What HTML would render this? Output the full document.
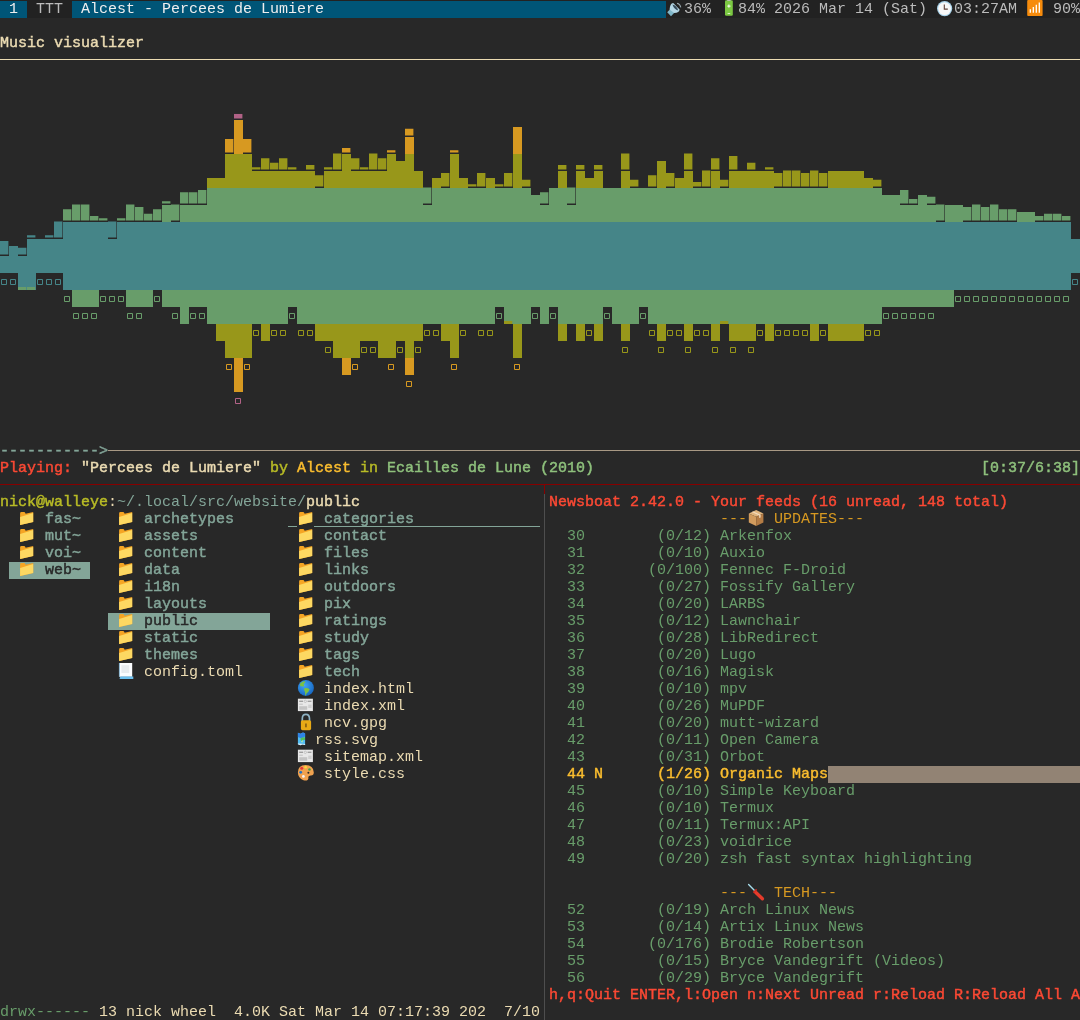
<!DOCTYPE html>
<html><head><meta charset="utf-8"><style>
html,body{margin:0;padding:0;}
body{width:1080px;height:1020px;overflow:hidden;background:#282828;position:relative;font-family:"Liberation Mono", monospace;font-size:15px;line-height:17px;}
.t{position:absolute;white-space:pre;height:17px;will-change:transform;}
.r{position:absolute;}
.i{position:absolute;}
</style></head><body>
<div class="r" style="left:0px;top:0px;width:1080px;height:18px;background:#222222;"></div>
<div class="r" style="left:0px;top:1px;width:27px;height:17px;background:#005577;"></div>
<div class="r" style="left:72px;top:1px;width:594px;height:17px;background:#005577;"></div>
<div class="t" style="left:9px;top:1px;color:#eeeeee;">1</div>
<div class="t" style="left:36px;top:1px;color:#bbbbbb;">TTT</div>
<div class="t" style="left:81px;top:1px;color:#eeeeee;">Alcest - Percees de Lumiere</div>
<div class="t" style="left:684px;top:1px;color:#bbbbbb;">36%</div>
<div class="t" style="left:738px;top:1px;color:#bbbbbb;">84% 2026 Mar 14 (Sat)</div>
<div class="t" style="left:954px;top:1px;color:#bbbbbb;">03:27AM</div>
<div class="t" style="left:1053px;top:1px;color:#bbbbbb;">90%</div>
<div class="t" style="left:0px;top:35px;color:#ebdbb2;-webkit-text-stroke:0.45px #ebdbb2;">Music visualizer</div>
<div class="r" style="left:0px;top:59px;width:1080px;height:1px;background:#ebdbb2;"></div>
<svg class="i" style="left:0;top:0" width="1080" height="450" shape-rendering="auto">
<path fill="#458588" d="M0 256h9v17h-9zM0 240.88h8.4v13.62h-8.4zM9 256h9v17h-9zM9 246h9v10h-9zM18 256h9v17h-9zM18 247.69h8.4v6.81h-8.4zM18 273h9v17h-9zM27 256h9v17h-9zM27 239h9v17h-9zM27 235.23h8.4v2.27h-8.4zM27 273h9v17h-9zM36 256h9v17h-9zM36 239h9v17h-9zM45 256h9v17h-9zM45 239h9v17h-9zM45 235.23h8.4v2.27h-8.4zM54 256h9v17h-9zM54 239h9v17h-9zM54 221.61h8.4v15.89h-8.4zM63 256h9v17h-9zM63 239h9v17h-9zM63 222h9v17h-9zM63 273h9v17h-9zM72 256h9v17h-9zM72 239h9v17h-9zM72 222h9v17h-9zM72 273h9v17h-9zM81 256h9v17h-9zM81 239h9v17h-9zM81 222h9v17h-9zM81 273h9v17h-9zM90 256h9v17h-9zM90 239h9v17h-9zM90 222h9v17h-9zM90 273h9v17h-9zM99 256h9v17h-9zM99 239h9v17h-9zM99 222h9v17h-9zM99 273h9v17h-9zM108 256h9v17h-9zM108 239h9v17h-9zM108 221.61h8.4v15.89h-8.4zM108 273h9v17h-9zM117 256h9v17h-9zM117 239h9v17h-9zM117 222h9v17h-9zM117 273h9v17h-9zM126 256h9v17h-9zM126 239h9v17h-9zM126 222h9v17h-9zM126 273h9v17h-9zM135 256h9v17h-9zM135 239h9v17h-9zM135 222h9v17h-9zM135 273h9v17h-9zM144 256h9v17h-9zM144 239h9v17h-9zM144 222h9v17h-9zM144 273h9v17h-9zM153 256h9v17h-9zM153 239h9v17h-9zM153 222h9v17h-9zM153 273h9v17h-9zM162 256h9v17h-9zM162 239h9v17h-9zM162 222h9v17h-9zM162 273h9v17h-9zM171 256h9v17h-9zM171 239h9v17h-9zM171 222h9v17h-9zM171 273h9v17h-9zM180 256h9v17h-9zM180 239h9v17h-9zM180 222h9v17h-9zM180 273h9v17h-9zM189 256h9v17h-9zM189 239h9v17h-9zM189 222h9v17h-9zM189 273h9v17h-9zM198 256h9v17h-9zM198 239h9v17h-9zM198 222h9v17h-9zM198 273h9v17h-9zM207 256h9v17h-9zM207 239h9v17h-9zM207 222h9v17h-9zM207 273h9v17h-9zM216 256h9v17h-9zM216 239h9v17h-9zM216 222h9v17h-9zM216 273h9v17h-9zM225 256h9v17h-9zM225 239h9v17h-9zM225 222h9v17h-9zM225 273h9v17h-9zM234 256h9v17h-9zM234 239h9v17h-9zM234 222h9v17h-9zM234 273h9v17h-9zM243 256h9v17h-9zM243 239h9v17h-9zM243 222h9v17h-9zM243 273h9v17h-9zM252 256h9v17h-9zM252 239h9v17h-9zM252 222h9v17h-9zM252 273h9v17h-9zM261 256h9v17h-9zM261 239h9v17h-9zM261 222h9v17h-9zM261 273h9v17h-9zM270 256h9v17h-9zM270 239h9v17h-9zM270 222h9v17h-9zM270 273h9v17h-9zM279 256h9v17h-9zM279 239h9v17h-9zM279 222h9v17h-9zM279 273h9v17h-9zM288 256h9v17h-9zM288 239h9v17h-9zM288 222h9v17h-9zM288 273h9v17h-9zM297 256h9v17h-9zM297 239h9v17h-9zM297 222h9v17h-9zM297 273h9v17h-9zM306 256h9v17h-9zM306 239h9v17h-9zM306 222h9v17h-9zM306 273h9v17h-9zM315 256h9v17h-9zM315 239h9v17h-9zM315 222h9v17h-9zM315 273h9v17h-9zM324 256h9v17h-9zM324 239h9v17h-9zM324 222h9v17h-9zM324 273h9v17h-9zM333 256h9v17h-9zM333 239h9v17h-9zM333 222h9v17h-9zM333 273h9v17h-9zM342 256h9v17h-9zM342 239h9v17h-9zM342 222h9v17h-9zM342 273h9v17h-9zM351 256h9v17h-9zM351 239h9v17h-9zM351 222h9v17h-9zM351 273h9v17h-9zM360 256h9v17h-9zM360 239h9v17h-9zM360 222h9v17h-9zM360 273h9v17h-9zM369 256h9v17h-9zM369 239h9v17h-9zM369 222h9v17h-9zM369 273h9v17h-9zM378 256h9v17h-9zM378 239h9v17h-9zM378 222h9v17h-9zM378 273h9v17h-9zM387 256h9v17h-9zM387 239h9v17h-9zM387 222h9v17h-9zM387 273h9v17h-9zM396 256h9v17h-9zM396 239h9v17h-9zM396 222h9v17h-9zM396 273h9v17h-9zM405 256h9v17h-9zM405 239h9v17h-9zM405 222h9v17h-9zM405 273h9v17h-9zM414 256h9v17h-9zM414 239h9v17h-9zM414 222h9v17h-9zM414 273h9v17h-9zM423 256h9v17h-9zM423 239h9v17h-9zM423 222h9v17h-9zM423 273h9v17h-9zM432 256h9v17h-9zM432 239h9v17h-9zM432 222h9v17h-9zM432 273h9v17h-9zM441 256h9v17h-9zM441 239h9v17h-9zM441 222h9v17h-9zM441 273h9v17h-9zM450 256h9v17h-9zM450 239h9v17h-9zM450 222h9v17h-9zM450 273h9v17h-9zM459 256h9v17h-9zM459 239h9v17h-9zM459 222h9v17h-9zM459 273h9v17h-9zM468 256h9v17h-9zM468 239h9v17h-9zM468 222h9v17h-9zM468 273h9v17h-9zM477 256h9v17h-9zM477 239h9v17h-9zM477 222h9v17h-9zM477 273h9v17h-9zM486 256h9v17h-9zM486 239h9v17h-9zM486 222h9v17h-9zM486 273h9v17h-9zM495 256h9v17h-9zM495 239h9v17h-9zM495 222h9v17h-9zM495 273h9v17h-9zM504 256h9v17h-9zM504 239h9v17h-9zM504 222h9v17h-9zM504 273h9v17h-9zM513 256h9v17h-9zM513 239h9v17h-9zM513 222h9v17h-9zM513 273h9v17h-9zM522 256h9v17h-9zM522 239h9v17h-9zM522 222h9v17h-9zM522 273h9v17h-9zM531 256h9v17h-9zM531 239h9v17h-9zM531 222h9v17h-9zM531 273h9v17h-9zM540 256h9v17h-9zM540 239h9v17h-9zM540 222h9v17h-9zM540 273h9v17h-9zM549 256h9v17h-9zM549 239h9v17h-9zM549 222h9v17h-9zM549 273h9v17h-9zM558 256h9v17h-9zM558 239h9v17h-9zM558 222h9v17h-9zM558 273h9v17h-9zM567 256h9v17h-9zM567 239h9v17h-9zM567 222h9v17h-9zM567 273h9v17h-9zM576 256h9v17h-9zM576 239h9v17h-9zM576 222h9v17h-9zM576 273h9v17h-9zM585 256h9v17h-9zM585 239h9v17h-9zM585 222h9v17h-9zM585 273h9v17h-9zM594 256h9v17h-9zM594 239h9v17h-9zM594 222h9v17h-9zM594 273h9v17h-9zM603 256h9v17h-9zM603 239h9v17h-9zM603 222h9v17h-9zM603 273h9v17h-9zM612 256h9v17h-9zM612 239h9v17h-9zM612 222h9v17h-9zM612 273h9v17h-9zM621 256h9v17h-9zM621 239h9v17h-9zM621 222h9v17h-9zM621 273h9v17h-9zM630 256h9v17h-9zM630 239h9v17h-9zM630 222h9v17h-9zM630 273h9v17h-9zM639 256h9v17h-9zM639 239h9v17h-9zM639 222h9v17h-9zM639 273h9v17h-9zM648 256h9v17h-9zM648 239h9v17h-9zM648 222h9v17h-9zM648 273h9v17h-9zM657 256h9v17h-9zM657 239h9v17h-9zM657 222h9v17h-9zM657 273h9v17h-9zM666 256h9v17h-9zM666 239h9v17h-9zM666 222h9v17h-9zM666 273h9v17h-9zM675 256h9v17h-9zM675 239h9v17h-9zM675 222h9v17h-9zM675 273h9v17h-9zM684 256h9v17h-9zM684 239h9v17h-9zM684 222h9v17h-9zM684 273h9v17h-9zM693 256h9v17h-9zM693 239h9v17h-9zM693 222h9v17h-9zM693 273h9v17h-9zM702 256h9v17h-9zM702 239h9v17h-9zM702 222h9v17h-9zM702 273h9v17h-9zM711 256h9v17h-9zM711 239h9v17h-9zM711 222h9v17h-9zM711 273h9v17h-9zM720 256h9v17h-9zM720 239h9v17h-9zM720 222h9v17h-9zM720 273h9v17h-9zM729 256h9v17h-9zM729 239h9v17h-9zM729 222h9v17h-9zM729 273h9v17h-9zM738 256h9v17h-9zM738 239h9v17h-9zM738 222h9v17h-9zM738 273h9v17h-9zM747 256h9v17h-9zM747 239h9v17h-9zM747 222h9v17h-9zM747 273h9v17h-9zM756 256h9v17h-9zM756 239h9v17h-9zM756 222h9v17h-9zM756 273h9v17h-9zM765 256h9v17h-9zM765 239h9v17h-9zM765 222h9v17h-9zM765 273h9v17h-9zM774 256h9v17h-9zM774 239h9v17h-9zM774 222h9v17h-9zM774 273h9v17h-9zM783 256h9v17h-9zM783 239h9v17h-9zM783 222h9v17h-9zM783 273h9v17h-9zM792 256h9v17h-9zM792 239h9v17h-9zM792 222h9v17h-9zM792 273h9v17h-9zM801 256h9v17h-9zM801 239h9v17h-9zM801 222h9v17h-9zM801 273h9v17h-9zM810 256h9v17h-9zM810 239h9v17h-9zM810 222h9v17h-9zM810 273h9v17h-9zM819 256h9v17h-9zM819 239h9v17h-9zM819 222h9v17h-9zM819 273h9v17h-9zM828 256h9v17h-9zM828 239h9v17h-9zM828 222h9v17h-9zM828 273h9v17h-9zM837 256h9v17h-9zM837 239h9v17h-9zM837 222h9v17h-9zM837 273h9v17h-9zM846 256h9v17h-9zM846 239h9v17h-9zM846 222h9v17h-9zM846 273h9v17h-9zM855 256h9v17h-9zM855 239h9v17h-9zM855 222h9v17h-9zM855 273h9v17h-9zM864 256h9v17h-9zM864 239h9v17h-9zM864 222h9v17h-9zM864 273h9v17h-9zM873 256h9v17h-9zM873 239h9v17h-9zM873 222h9v17h-9zM873 273h9v17h-9zM882 256h9v17h-9zM882 239h9v17h-9zM882 222h9v17h-9zM882 273h9v17h-9zM891 256h9v17h-9zM891 239h9v17h-9zM891 222h9v17h-9zM891 273h9v17h-9zM900 256h9v17h-9zM900 239h9v17h-9zM900 222h9v17h-9zM900 273h9v17h-9zM909 256h9v17h-9zM909 239h9v17h-9zM909 222h9v17h-9zM909 273h9v17h-9zM918 256h9v17h-9zM918 239h9v17h-9zM918 222h9v17h-9zM918 273h9v17h-9zM927 256h9v17h-9zM927 239h9v17h-9zM927 222h9v17h-9zM927 273h9v17h-9zM936 256h9v17h-9zM936 239h9v17h-9zM936 222h9v17h-9zM936 273h9v17h-9zM945 256h9v17h-9zM945 239h9v17h-9zM945 222h9v17h-9zM945 273h9v17h-9zM954 256h9v17h-9zM954 239h9v17h-9zM954 222h9v17h-9zM954 273h9v17h-9zM963 256h9v17h-9zM963 239h9v17h-9zM963 222h9v17h-9zM963 273h9v17h-9zM972 256h9v17h-9zM972 239h9v17h-9zM972 222h9v17h-9zM972 273h9v17h-9zM981 256h9v17h-9zM981 239h9v17h-9zM981 222h9v17h-9zM981 273h9v17h-9zM990 256h9v17h-9zM990 239h9v17h-9zM990 222h9v17h-9zM990 273h9v17h-9zM999 256h9v17h-9zM999 239h9v17h-9zM999 222h9v17h-9zM999 273h9v17h-9zM1008 256h9v17h-9zM1008 239h9v17h-9zM1008 222h9v17h-9zM1008 273h9v17h-9zM1017 256h9v17h-9zM1017 239h9v17h-9zM1017 222h9v17h-9zM1017 273h9v17h-9zM1026 256h9v17h-9zM1026 239h9v17h-9zM1026 222h9v17h-9zM1026 273h9v17h-9zM1035 256h9v17h-9zM1035 239h9v17h-9zM1035 222h9v17h-9zM1035 273h9v17h-9zM1044 256h9v17h-9zM1044 239h9v17h-9zM1044 222h9v17h-9zM1044 273h9v17h-9zM1053 256h9v17h-9zM1053 239h9v17h-9zM1053 222h9v17h-9zM1053 273h9v17h-9zM1062 256h9v17h-9zM1062 239h9v17h-9zM1062 222h9v17h-9zM1062 273h9v17h-9zM1071 256h9v17h-9zM1071 239h9v17h-9z"/>
<path fill="#689d6a" d="M18 287h8.2v3h-8.2zM27 287h8.2v3h-8.2zM63 209.15h8.4v11.35h-8.4zM72 204.61h8.4v15.89h-8.4zM72 290h9v17h-9zM81 204.61h8.4v15.89h-8.4zM81 290h9v17h-9zM90 215.96h8.4v4.54h-8.4zM90 290h9v17h-9zM99 218.23h8.4v2.27h-8.4zM117 218.23h8.4v2.27h-8.4zM126 204.61h8.4v15.89h-8.4zM126 290h9v17h-9zM135 206.88h8.4v13.62h-8.4zM135 290h9v17h-9zM144 213.69h8.4v6.81h-8.4zM144 290h9v17h-9zM153 209.15h8.4v11.35h-8.4zM162 205h9v17h-9zM162 201.23h8.4v2.27h-8.4zM162 290h9v17h-9zM171 204.61h8.4v15.89h-8.4zM171 290h9v17h-9zM180 205h9v17h-9zM180 192.15h8.4v11.35h-8.4zM180 290h9v17h-9zM180 307h9v17h-9zM189 205h9v17h-9zM189 192.15h8.4v11.35h-8.4zM189 290h9v17h-9zM198 205h9v17h-9zM198 189.88h8.4v13.62h-8.4zM198 290h9v17h-9zM207 205h9v17h-9zM207 188h9v17h-9zM207 290h9v17h-9zM207 307h9v17h-9zM216 205h9v17h-9zM216 188h9v17h-9zM216 290h9v17h-9zM216 307h9v17h-9zM225 205h9v17h-9zM225 188h9v17h-9zM225 290h9v17h-9zM225 307h9v17h-9zM234 205h9v17h-9zM234 188h9v17h-9zM234 290h9v17h-9zM234 307h9v17h-9zM243 205h9v17h-9zM243 188h9v17h-9zM243 290h9v17h-9zM243 307h9v17h-9zM252 205h9v17h-9zM252 188h9v17h-9zM252 290h9v17h-9zM252 307h9v17h-9zM261 205h9v17h-9zM261 188h9v17h-9zM261 290h9v17h-9zM261 307h9v17h-9zM270 205h9v17h-9zM270 188h9v17h-9zM270 290h9v17h-9zM270 307h9v17h-9zM279 205h9v17h-9zM279 188h9v17h-9zM279 290h9v17h-9zM279 307h9v17h-9zM288 205h9v17h-9zM288 188h9v17h-9zM288 290h9v17h-9zM297 205h9v17h-9zM297 188h9v17h-9zM297 290h9v17h-9zM297 307h9v17h-9zM306 205h9v17h-9zM306 188h9v17h-9zM306 290h9v17h-9zM306 307h9v17h-9zM315 205h9v17h-9zM315 188h9v17h-9zM315 290h9v17h-9zM315 307h9v17h-9zM324 205h9v17h-9zM324 188h9v17h-9zM324 290h9v17h-9zM324 307h9v17h-9zM333 205h9v17h-9zM333 188h9v17h-9zM333 290h9v17h-9zM333 307h9v17h-9zM342 205h9v17h-9zM342 188h9v17h-9zM342 290h9v17h-9zM342 307h9v17h-9zM351 205h9v17h-9zM351 188h9v17h-9zM351 290h9v17h-9zM351 307h9v17h-9zM360 205h9v17h-9zM360 188h9v17h-9zM360 290h9v17h-9zM360 307h9v17h-9zM369 205h9v17h-9zM369 188h9v17h-9zM369 290h9v17h-9zM369 307h9v17h-9zM378 205h9v17h-9zM378 188h9v17h-9zM378 290h9v17h-9zM378 307h9v17h-9zM387 205h9v17h-9zM387 188h9v17h-9zM387 290h9v17h-9zM387 307h9v17h-9zM396 205h9v17h-9zM396 188h9v17h-9zM396 290h9v17h-9zM396 307h9v17h-9zM405 205h9v17h-9zM405 188h9v17h-9zM405 290h9v17h-9zM405 307h9v17h-9zM414 205h9v17h-9zM414 188h9v17h-9zM414 290h9v17h-9zM414 307h9v17h-9zM423 205h9v17h-9zM423 187.61h8.4v15.89h-8.4zM423 290h9v17h-9zM423 307h9v17h-9zM432 205h9v17h-9zM432 188h9v17h-9zM432 290h9v17h-9zM432 307h9v17h-9zM441 205h9v17h-9zM441 188h9v17h-9zM441 290h9v17h-9zM441 307h9v17h-9zM450 205h9v17h-9zM450 188h9v17h-9zM450 290h9v17h-9zM450 307h9v17h-9zM459 205h9v17h-9zM459 188h9v17h-9zM459 290h9v17h-9zM459 307h9v17h-9zM468 205h9v17h-9zM468 188h9v17h-9zM468 290h9v17h-9zM468 307h9v17h-9zM477 205h9v17h-9zM477 188h9v17h-9zM477 290h9v17h-9zM477 307h9v17h-9zM486 205h9v17h-9zM486 188h9v17h-9zM486 290h9v17h-9zM486 307h9v17h-9zM495 205h9v17h-9zM495 188h9v17h-9zM495 290h9v17h-9zM504 205h9v17h-9zM504 188h9v17h-9zM504 290h9v17h-9zM504 307h9v17h-9zM513 205h9v17h-9zM513 188h9v17h-9zM513 290h9v17h-9zM513 307h9v17h-9zM522 205h9v17h-9zM522 188h9v17h-9zM522 290h9v17h-9zM522 307h9v17h-9zM531 205h9v17h-9zM531 195h9v10h-9zM531 290h9v17h-9zM540 205h9v17h-9zM540 192.15h8.4v11.35h-8.4zM540 290h9v17h-9zM540 307h9v17h-9zM549 205h9v17h-9zM549 188h9v17h-9zM549 290h9v17h-9zM558 205h9v17h-9zM558 188h9v17h-9zM558 290h9v17h-9zM558 307h9v17h-9zM567 205h9v17h-9zM567 187.61h8.4v15.89h-8.4zM567 290h9v17h-9zM567 307h9v17h-9zM576 205h9v17h-9zM576 188h9v17h-9zM576 290h9v17h-9zM576 307h9v17h-9zM585 205h9v17h-9zM585 188h9v17h-9zM585 290h9v17h-9zM585 307h9v17h-9zM594 205h9v17h-9zM594 188h9v17h-9zM594 290h9v17h-9zM594 307h9v17h-9zM603 205h9v17h-9zM603 188h9v17h-9zM603 290h9v17h-9zM612 205h9v17h-9zM612 188h9v17h-9zM612 290h9v17h-9zM612 307h9v17h-9zM621 205h9v17h-9zM621 188h9v17h-9zM621 290h9v17h-9zM621 307h9v17h-9zM630 205h9v17h-9zM630 188h9v17h-9zM630 290h9v17h-9zM630 307h9v17h-9zM639 205h9v17h-9zM639 188h9v17h-9zM639 290h9v17h-9zM648 205h9v17h-9zM648 188h9v17h-9zM648 290h9v17h-9zM648 307h9v17h-9zM657 205h9v17h-9zM657 188h9v17h-9zM657 290h9v17h-9zM657 307h9v17h-9zM666 205h9v17h-9zM666 188h9v17h-9zM666 290h9v17h-9zM666 307h9v17h-9zM675 205h9v17h-9zM675 188h9v17h-9zM675 290h9v17h-9zM675 307h9v17h-9zM684 205h9v17h-9zM684 188h9v17h-9zM684 290h9v17h-9zM684 307h9v17h-9zM693 205h9v17h-9zM693 188h9v17h-9zM693 290h9v17h-9zM693 307h9v17h-9zM702 205h9v17h-9zM702 188h9v17h-9zM702 290h9v17h-9zM702 307h9v17h-9zM711 205h9v17h-9zM711 188h9v17h-9zM711 290h9v17h-9zM711 307h9v17h-9zM720 205h9v17h-9zM720 188h9v17h-9zM720 290h9v17h-9zM720 307h9v17h-9zM729 205h9v17h-9zM729 188h9v17h-9zM729 290h9v17h-9zM729 307h9v17h-9zM738 205h9v17h-9zM738 188h9v17h-9zM738 290h9v17h-9zM738 307h9v17h-9zM747 205h9v17h-9zM747 188h9v17h-9zM747 290h9v17h-9zM747 307h9v17h-9zM756 205h9v17h-9zM756 188h9v17h-9zM756 290h9v17h-9zM756 307h9v17h-9zM765 205h9v17h-9zM765 188h9v17h-9zM765 290h9v17h-9zM765 307h9v17h-9zM774 205h9v17h-9zM774 188h9v17h-9zM774 290h9v17h-9zM774 307h9v17h-9zM783 205h9v17h-9zM783 188h9v17h-9zM783 290h9v17h-9zM783 307h9v17h-9zM792 205h9v17h-9zM792 188h9v17h-9zM792 290h9v17h-9zM792 307h9v17h-9zM801 205h9v17h-9zM801 188h9v17h-9zM801 290h9v17h-9zM801 307h9v17h-9zM810 205h9v17h-9zM810 188h9v17h-9zM810 290h9v17h-9zM810 307h9v17h-9zM819 205h9v17h-9zM819 188h9v17h-9zM819 290h9v17h-9zM819 307h9v17h-9zM828 205h9v17h-9zM828 188h9v17h-9zM828 290h9v17h-9zM828 307h9v17h-9zM837 205h9v17h-9zM837 188h9v17h-9zM837 290h9v17h-9zM837 307h9v17h-9zM846 205h9v17h-9zM846 188h9v17h-9zM846 290h9v17h-9zM846 307h9v17h-9zM855 205h9v17h-9zM855 188h9v17h-9zM855 290h9v17h-9zM855 307h9v17h-9zM864 205h9v17h-9zM864 188h9v17h-9zM864 290h9v17h-9zM864 307h9v17h-9zM873 205h9v17h-9zM873 188h9v17h-9zM873 290h9v17h-9zM873 307h9v17h-9zM882 205h9v17h-9zM882 195h9v10h-9zM882 290h9v17h-9zM891 205h9v17h-9zM891 195h9v10h-9zM891 290h9v17h-9zM900 205h9v17h-9zM900 189.88h8.4v13.62h-8.4zM900 290h9v17h-9zM909 205h9v17h-9zM909 198.96h8.4v4.54h-8.4zM909 290h9v17h-9zM918 205h9v17h-9zM918 195h9v10h-9zM918 290h9v17h-9zM927 205h9v17h-9zM927 196.69h8.4v6.81h-8.4zM927 290h9v17h-9zM936 204.61h8.4v15.89h-8.4zM936 290h9v17h-9zM945 205h9v17h-9zM945 290h9v17h-9zM954 205h9v17h-9zM963 206.88h8.4v13.62h-8.4zM972 204.61h8.4v15.89h-8.4zM981 206.88h8.4v13.62h-8.4zM990 204.61h8.4v15.89h-8.4zM999 209.15h8.4v11.35h-8.4zM1008 209.15h8.4v11.35h-8.4zM1017 212h9v10h-9zM1026 212h9v10h-9zM1035 215.96h8.4v4.54h-8.4zM1044 213.69h8.4v6.81h-8.4zM1053 213.69h8.4v6.81h-8.4zM1062 215.96h8.4v4.54h-8.4z"/>
<path fill="#98971a" d="M207 178h9v10h-9zM216 178h9v10h-9zM216 324h9v17h-9zM225 171h9v17h-9zM225 154h9v17h-9zM225 324h9v17h-9zM225 341h9v17h-9zM234 171h9v17h-9zM234 154h9v17h-9zM234 324h9v17h-9zM234 341h9v17h-9zM243 171h9v17h-9zM243 154h9v17h-9zM243 324h9v17h-9zM243 341h9v17h-9zM252 171h9v17h-9zM252 167.23h8.4v2.27h-8.4zM261 171h9v17h-9zM261 158.15h8.4v11.35h-8.4zM261 324h9v17h-9zM270 171h9v17h-9zM270 162.69h8.4v6.81h-8.4zM279 171h9v17h-9zM279 158.15h8.4v11.35h-8.4zM288 171h9v17h-9zM288 167.23h8.4v2.27h-8.4zM297 171h9v17h-9zM306 171h9v17h-9zM306 164.96h8.4v4.54h-8.4zM315 175.15h8.4v11.35h-8.4zM315 324h9v17h-9zM324 171h9v17h-9zM324 167.23h8.4v2.27h-8.4zM324 324h9v17h-9zM333 171h9v17h-9zM333 153.61h8.4v15.89h-8.4zM333 324h9v17h-9zM333 341h9v17h-9zM342 171h9v17h-9zM342 154h9v17h-9zM342 324h9v17h-9zM342 341h9v17h-9zM351 171h9v17h-9zM351 158.15h8.4v11.35h-8.4zM351 324h9v17h-9zM351 341h9v17h-9zM360 171h9v17h-9zM360 167.23h8.4v2.27h-8.4zM360 324h9v17h-9zM369 171h9v17h-9zM369 153.61h8.4v15.89h-8.4zM369 324h9v17h-9zM378 171h9v17h-9zM378 158.15h8.4v11.35h-8.4zM378 324h9v17h-9zM378 341h9v17h-9zM387 171h9v17h-9zM387 154h9v17h-9zM387 324h9v17h-9zM387 341h9v17h-9zM396 171h9v17h-9zM396 161h9v10h-9zM396 324h9v17h-9zM405 171h9v17h-9zM405 154h9v17h-9zM405 324h9v17h-9zM405 341h9v17h-9zM414 171h9v17h-9zM414 324h9v17h-9zM432 178h9v10h-9zM441 172.88h8.4v13.62h-8.4zM441 324h9v17h-9zM450 171h9v17h-9zM450 154h9v17h-9zM450 324h9v17h-9zM450 341h9v17h-9zM459 178h9v10h-9zM468 184.23h8.4v2.27h-8.4zM477 172.88h8.4v13.62h-8.4zM486 178h9v10h-9zM495 184.23h8.4v2.27h-8.4zM504 172.88h8.4v13.62h-8.4zM504 321h8.2v3h-8.2zM513 171h9v17h-9zM513 154h9v17h-9zM513 324h9v17h-9zM513 341h9v17h-9zM522 179.69h8.4v6.81h-8.4zM558 171h9v17h-9zM558 164.96h8.4v4.54h-8.4zM558 324h9v17h-9zM576 171h9v17h-9zM576 164.96h8.4v4.54h-8.4zM576 324h9v17h-9zM585 178h9v10h-9zM594 171h9v17h-9zM594 164.96h8.4v4.54h-8.4zM594 324h9v17h-9zM621 171h9v17h-9zM621 153.61h8.4v15.89h-8.4zM621 324h9v17h-9zM630 179.69h8.4v6.81h-8.4zM648 175.15h8.4v11.35h-8.4zM657 171h9v17h-9zM657 161h9v10h-9zM657 324h9v17h-9zM666 172.88h8.4v13.62h-8.4zM675 178h9v10h-9zM684 171h9v17h-9zM684 153.61h8.4v15.89h-8.4zM684 324h9v17h-9zM693 181.96h8.4v4.54h-8.4zM702 170.61h8.4v15.89h-8.4zM711 171h9v17h-9zM711 158.15h8.4v11.35h-8.4zM711 324h9v17h-9zM720 179.69h8.4v6.81h-8.4zM720 321h8.2v3h-8.2zM729 171h9v17h-9zM729 155.88h8.4v13.62h-8.4zM729 324h9v17h-9zM738 171h9v17h-9zM738 324h9v17h-9zM747 171h9v17h-9zM747 162.69h8.4v6.81h-8.4zM747 324h9v17h-9zM756 171h9v17h-9zM765 171h9v17h-9zM765 167.23h8.4v2.27h-8.4zM765 324h9v17h-9zM774 172.88h8.4v13.62h-8.4zM783 170.61h8.4v15.89h-8.4zM792 170.61h8.4v15.89h-8.4zM801 172.88h8.4v13.62h-8.4zM810 170.61h8.4v15.89h-8.4zM810 324h9v17h-9zM819 172.88h8.4v13.62h-8.4zM828 171h9v17h-9zM828 324h9v17h-9zM837 171h9v17h-9zM837 324h9v17h-9zM846 171h9v17h-9zM846 324h9v17h-9zM855 171h9v17h-9zM855 324h9v17h-9zM864 178h9v10h-9zM873 179.69h8.4v6.81h-8.4z"/>
<path fill="#d79921" d="M225 138.88h8.4v13.62h-8.4zM234 137h9v17h-9zM234 120h9v17h-9zM234 358h9v17h-9zM234 375h9v17h-9zM243 138.88h8.4v13.62h-8.4zM342 147.96h8.4v4.54h-8.4zM342 358h9v17h-9zM387 150.23h8.4v2.27h-8.4zM405 137h9v17h-9zM405 128.69h8.4v6.81h-8.4zM405 358h9v17h-9zM450 150.23h8.4v2.27h-8.4zM513 137h9v17h-9zM513 127h9v10h-9z"/>
<path fill="#b16286" d="M234 113.96h8.4v4.54h-8.4z"/>
<path fill="none" stroke="#458588" stroke-width="1" d="M1.5 279.5h5v5h-5zM10.5 279.5h5v5h-5zM37.5 279.5h5v5h-5zM46.5 279.5h5v5h-5zM55.5 279.5h5v5h-5zM1072.5 279.5h5v5h-5z"/>
<path fill="none" stroke="#689d6a" stroke-width="1" d="M64.5 296.5h5v5h-5zM73.5 313.5h5v5h-5zM82.5 313.5h5v5h-5zM91.5 313.5h5v5h-5zM100.5 296.5h5v5h-5zM109.5 296.5h5v5h-5zM118.5 296.5h5v5h-5zM127.5 313.5h5v5h-5zM136.5 313.5h5v5h-5zM154.5 296.5h5v5h-5zM172.5 313.5h5v5h-5zM190.5 313.5h5v5h-5zM199.5 313.5h5v5h-5zM289.5 313.5h5v5h-5zM496.5 313.5h5v5h-5zM532.5 313.5h5v5h-5zM550.5 313.5h5v5h-5zM604.5 313.5h5v5h-5zM640.5 313.5h5v5h-5zM883.5 313.5h5v5h-5zM892.5 313.5h5v5h-5zM901.5 313.5h5v5h-5zM910.5 313.5h5v5h-5zM919.5 313.5h5v5h-5zM928.5 313.5h5v5h-5zM955.5 296.5h5v5h-5zM964.5 296.5h5v5h-5zM973.5 296.5h5v5h-5zM982.5 296.5h5v5h-5zM991.5 296.5h5v5h-5zM1000.5 296.5h5v5h-5zM1009.5 296.5h5v5h-5zM1018.5 296.5h5v5h-5zM1027.5 296.5h5v5h-5zM1036.5 296.5h5v5h-5zM1045.5 296.5h5v5h-5zM1054.5 296.5h5v5h-5zM1063.5 296.5h5v5h-5z"/>
<path fill="none" stroke="#d79921" stroke-width="1" d="M226.5 364.5h5v5h-5zM244.5 364.5h5v5h-5zM352.5 364.5h5v5h-5zM388.5 364.5h5v5h-5zM406.5 381.5h5v5h-5zM451.5 364.5h5v5h-5zM514.5 364.5h5v5h-5z"/>
<path fill="none" stroke="#b16286" stroke-width="1" d="M235.5 398.5h5v5h-5z"/>
<path fill="none" stroke="#98971a" stroke-width="1" d="M253.5 330.5h5v5h-5zM271.5 330.5h5v5h-5zM280.5 330.5h5v5h-5zM298.5 330.5h5v5h-5zM307.5 330.5h5v5h-5zM325.5 347.5h5v5h-5zM361.5 347.5h5v5h-5zM370.5 347.5h5v5h-5zM397.5 347.5h5v5h-5zM415.5 347.5h5v5h-5zM424.5 330.5h5v5h-5zM433.5 330.5h5v5h-5zM460.5 330.5h5v5h-5zM478.5 330.5h5v5h-5zM487.5 330.5h5v5h-5zM586.5 330.5h5v5h-5zM622.5 347.5h5v5h-5zM649.5 330.5h5v5h-5zM658.5 347.5h5v5h-5zM667.5 330.5h5v5h-5zM676.5 330.5h5v5h-5zM685.5 347.5h5v5h-5zM694.5 330.5h5v5h-5zM703.5 330.5h5v5h-5zM712.5 347.5h5v5h-5zM730.5 347.5h5v5h-5zM748.5 347.5h5v5h-5zM757.5 330.5h5v5h-5zM775.5 330.5h5v5h-5zM784.5 330.5h5v5h-5zM793.5 330.5h5v5h-5zM802.5 330.5h5v5h-5zM820.5 330.5h5v5h-5zM865.5 330.5h5v5h-5zM874.5 330.5h5v5h-5z"/>
</svg>
<div class="t" style="left:0px;top:443px;color:#83a598;-webkit-text-stroke:0.45px #83a598;">-----------&gt;</div>
<div class="r" style="left:108px;top:450px;width:972px;height:1px;background:#a89984;"></div>
<div class="t" style="left:0px;top:460px;color:#fb4934;-webkit-text-stroke:0.45px #fb4934;">Playing: </div>
<div class="t" style="left:81px;top:460px;color:#ebdbb2;-webkit-text-stroke:0.45px #ebdbb2;">"Percees de Lumiere"</div>
<div class="t" style="left:261px;top:460px;color:#b8bb26;-webkit-text-stroke:0.45px #b8bb26;"> by </div>
<div class="t" style="left:297px;top:460px;color:#fabd2f;-webkit-text-stroke:0.45px #fabd2f;">Alcest</div>
<div class="t" style="left:351px;top:460px;color:#b8bb26;-webkit-text-stroke:0.45px #b8bb26;"> in </div>
<div class="t" style="left:387px;top:460px;color:#8ec07c;-webkit-text-stroke:0.45px #8ec07c;">Ecailles de Lune (2010)</div>
<div class="t" style="left:981px;top:460px;color:#8ec07c;-webkit-text-stroke:0.45px #8ec07c;">[0:37/6:38]</div>
<div class="r" style="left:0px;top:484px;width:1080px;height:1px;background:#870000;"></div>
<div class="r" style="left:544px;top:484px;width:1px;height:10px;background:#870000;"></div>
<div class="r" style="left:544px;top:494px;width:1px;height:526px;background:#4e4e4e;"></div>
<div class="t" style="left:0px;top:494px;color:#b8bb26;-webkit-text-stroke:0.45px #b8bb26;">nick@walleye</div>
<div class="t" style="left:108px;top:494px;color:#ebdbb2;">:</div>
<div class="t" style="left:117px;top:494px;color:#83a598;">~/.local/src/website/</div>
<div class="t" style="left:306px;top:494px;color:#ebdbb2;-webkit-text-stroke:0.45px #ebdbb2;">public</div>
<div class="r" style="left:9px;top:562px;width:81px;height:17px;background:#83a598;"></div>
<div class="r" style="left:108px;top:613px;width:162px;height:17px;background:#83a598;"></div>
<div class="t" style="left:45px;top:511px;color:#83a598;-webkit-text-stroke:0.45px #83a598;">fas~</div>
<svg class="i" style="left:18px;top:510px;overflow:visible" width="20" height="19" viewBox="0 -1 20 19"><path d="M2.1 7 L2.1 2.4 Q2.1 1.1 3.4 1.1 L6 1.1 Q7 1.1 7.3 2 L7.6 2.7 L15.2 1 L15.2 11 L2.1 13.9 Z" fill="#f5a524"/><path d="M2.1 6.1 L15.2 2.1 L15.2 10.9 L2.1 13.9 Z" fill="#fdd862"/></svg>
<div class="t" style="left:45px;top:528px;color:#83a598;-webkit-text-stroke:0.45px #83a598;">mut~</div>
<svg class="i" style="left:18px;top:527px;overflow:visible" width="20" height="19" viewBox="0 -1 20 19"><path d="M2.1 7 L2.1 2.4 Q2.1 1.1 3.4 1.1 L6 1.1 Q7 1.1 7.3 2 L7.6 2.7 L15.2 1 L15.2 11 L2.1 13.9 Z" fill="#f5a524"/><path d="M2.1 6.1 L15.2 2.1 L15.2 10.9 L2.1 13.9 Z" fill="#fdd862"/></svg>
<div class="t" style="left:45px;top:545px;color:#83a598;-webkit-text-stroke:0.45px #83a598;">voi~</div>
<svg class="i" style="left:18px;top:544px;overflow:visible" width="20" height="19" viewBox="0 -1 20 19"><path d="M2.1 7 L2.1 2.4 Q2.1 1.1 3.4 1.1 L6 1.1 Q7 1.1 7.3 2 L7.6 2.7 L15.2 1 L15.2 11 L2.1 13.9 Z" fill="#f5a524"/><path d="M2.1 6.1 L15.2 2.1 L15.2 10.9 L2.1 13.9 Z" fill="#fdd862"/></svg>
<div class="t" style="left:45px;top:562px;color:#282828;-webkit-text-stroke:0.45px #282828;">web~</div>
<svg class="i" style="left:18px;top:561px;overflow:visible" width="20" height="19" viewBox="0 -1 20 19"><path d="M2.1 7 L2.1 2.4 Q2.1 1.1 3.4 1.1 L6 1.1 Q7 1.1 7.3 2 L7.6 2.7 L15.2 1 L15.2 11 L2.1 13.9 Z" fill="#f5a524"/><path d="M2.1 6.1 L15.2 2.1 L15.2 10.9 L2.1 13.9 Z" fill="#fdd862"/></svg>
<div class="t" style="left:144px;top:511px;color:#83a598;-webkit-text-stroke:0.45px #83a598;">archetypes</div>
<svg class="i" style="left:117px;top:510px;overflow:visible" width="20" height="19" viewBox="0 -1 20 19"><path d="M2.1 7 L2.1 2.4 Q2.1 1.1 3.4 1.1 L6 1.1 Q7 1.1 7.3 2 L7.6 2.7 L15.2 1 L15.2 11 L2.1 13.9 Z" fill="#f5a524"/><path d="M2.1 6.1 L15.2 2.1 L15.2 10.9 L2.1 13.9 Z" fill="#fdd862"/></svg>
<div class="t" style="left:144px;top:528px;color:#83a598;-webkit-text-stroke:0.45px #83a598;">assets</div>
<svg class="i" style="left:117px;top:527px;overflow:visible" width="20" height="19" viewBox="0 -1 20 19"><path d="M2.1 7 L2.1 2.4 Q2.1 1.1 3.4 1.1 L6 1.1 Q7 1.1 7.3 2 L7.6 2.7 L15.2 1 L15.2 11 L2.1 13.9 Z" fill="#f5a524"/><path d="M2.1 6.1 L15.2 2.1 L15.2 10.9 L2.1 13.9 Z" fill="#fdd862"/></svg>
<div class="t" style="left:144px;top:545px;color:#83a598;-webkit-text-stroke:0.45px #83a598;">content</div>
<svg class="i" style="left:117px;top:544px;overflow:visible" width="20" height="19" viewBox="0 -1 20 19"><path d="M2.1 7 L2.1 2.4 Q2.1 1.1 3.4 1.1 L6 1.1 Q7 1.1 7.3 2 L7.6 2.7 L15.2 1 L15.2 11 L2.1 13.9 Z" fill="#f5a524"/><path d="M2.1 6.1 L15.2 2.1 L15.2 10.9 L2.1 13.9 Z" fill="#fdd862"/></svg>
<div class="t" style="left:144px;top:562px;color:#83a598;-webkit-text-stroke:0.45px #83a598;">data</div>
<svg class="i" style="left:117px;top:561px;overflow:visible" width="20" height="19" viewBox="0 -1 20 19"><path d="M2.1 7 L2.1 2.4 Q2.1 1.1 3.4 1.1 L6 1.1 Q7 1.1 7.3 2 L7.6 2.7 L15.2 1 L15.2 11 L2.1 13.9 Z" fill="#f5a524"/><path d="M2.1 6.1 L15.2 2.1 L15.2 10.9 L2.1 13.9 Z" fill="#fdd862"/></svg>
<div class="t" style="left:144px;top:579px;color:#83a598;-webkit-text-stroke:0.45px #83a598;">i18n</div>
<svg class="i" style="left:117px;top:578px;overflow:visible" width="20" height="19" viewBox="0 -1 20 19"><path d="M2.1 7 L2.1 2.4 Q2.1 1.1 3.4 1.1 L6 1.1 Q7 1.1 7.3 2 L7.6 2.7 L15.2 1 L15.2 11 L2.1 13.9 Z" fill="#f5a524"/><path d="M2.1 6.1 L15.2 2.1 L15.2 10.9 L2.1 13.9 Z" fill="#fdd862"/></svg>
<div class="t" style="left:144px;top:596px;color:#83a598;-webkit-text-stroke:0.45px #83a598;">layouts</div>
<svg class="i" style="left:117px;top:595px;overflow:visible" width="20" height="19" viewBox="0 -1 20 19"><path d="M2.1 7 L2.1 2.4 Q2.1 1.1 3.4 1.1 L6 1.1 Q7 1.1 7.3 2 L7.6 2.7 L15.2 1 L15.2 11 L2.1 13.9 Z" fill="#f5a524"/><path d="M2.1 6.1 L15.2 2.1 L15.2 10.9 L2.1 13.9 Z" fill="#fdd862"/></svg>
<div class="t" style="left:144px;top:613px;color:#282828;-webkit-text-stroke:0.45px #282828;">public</div>
<svg class="i" style="left:117px;top:612px;overflow:visible" width="20" height="19" viewBox="0 -1 20 19"><path d="M2.1 7 L2.1 2.4 Q2.1 1.1 3.4 1.1 L6 1.1 Q7 1.1 7.3 2 L7.6 2.7 L15.2 1 L15.2 11 L2.1 13.9 Z" fill="#f5a524"/><path d="M2.1 6.1 L15.2 2.1 L15.2 10.9 L2.1 13.9 Z" fill="#fdd862"/></svg>
<div class="t" style="left:144px;top:630px;color:#83a598;-webkit-text-stroke:0.45px #83a598;">static</div>
<svg class="i" style="left:117px;top:629px;overflow:visible" width="20" height="19" viewBox="0 -1 20 19"><path d="M2.1 7 L2.1 2.4 Q2.1 1.1 3.4 1.1 L6 1.1 Q7 1.1 7.3 2 L7.6 2.7 L15.2 1 L15.2 11 L2.1 13.9 Z" fill="#f5a524"/><path d="M2.1 6.1 L15.2 2.1 L15.2 10.9 L2.1 13.9 Z" fill="#fdd862"/></svg>
<div class="t" style="left:144px;top:647px;color:#83a598;-webkit-text-stroke:0.45px #83a598;">themes</div>
<svg class="i" style="left:117px;top:646px;overflow:visible" width="20" height="19" viewBox="0 -1 20 19"><path d="M2.1 7 L2.1 2.4 Q2.1 1.1 3.4 1.1 L6 1.1 Q7 1.1 7.3 2 L7.6 2.7 L15.2 1 L15.2 11 L2.1 13.9 Z" fill="#f5a524"/><path d="M2.1 6.1 L15.2 2.1 L15.2 10.9 L2.1 13.9 Z" fill="#fdd862"/></svg>
<div class="t" style="left:144px;top:664px;color:#ebdbb2;">config.toml</div>
<svg class="i" style="left:117px;top:663px;overflow:visible" width="20" height="19" viewBox="0 -1 20 19"><path d="M2.4 -1 H15.2 V12.8 H2.4 Z" fill="#fbfdff"/><path d="M2.4 -1 V12.8" stroke="#8cc8ee" stroke-width="0.7"/><rect x="4.4" y="1.2" width="7.8" height="7.8" fill="#e8ecef"/><path d="M2.6 15 Q2.6 12.4 4 12.4 H16.3 V15 Z" fill="#6cc0ef"/></svg>
<div class="t" style="left:324px;top:511px;color:#83a598;-webkit-text-stroke:0.45px #83a598;">categories</div>
<svg class="i" style="left:297px;top:510px;overflow:visible" width="20" height="19" viewBox="0 -1 20 19"><path d="M2.1 7 L2.1 2.4 Q2.1 1.1 3.4 1.1 L6 1.1 Q7 1.1 7.3 2 L7.6 2.7 L15.2 1 L15.2 11 L2.1 13.9 Z" fill="#f5a524"/><path d="M2.1 6.1 L15.2 2.1 L15.2 10.9 L2.1 13.9 Z" fill="#fdd862"/></svg>
<div class="t" style="left:324px;top:528px;color:#83a598;-webkit-text-stroke:0.45px #83a598;">contact</div>
<svg class="i" style="left:297px;top:527px;overflow:visible" width="20" height="19" viewBox="0 -1 20 19"><path d="M2.1 7 L2.1 2.4 Q2.1 1.1 3.4 1.1 L6 1.1 Q7 1.1 7.3 2 L7.6 2.7 L15.2 1 L15.2 11 L2.1 13.9 Z" fill="#f5a524"/><path d="M2.1 6.1 L15.2 2.1 L15.2 10.9 L2.1 13.9 Z" fill="#fdd862"/></svg>
<div class="t" style="left:324px;top:545px;color:#83a598;-webkit-text-stroke:0.45px #83a598;">files</div>
<svg class="i" style="left:297px;top:544px;overflow:visible" width="20" height="19" viewBox="0 -1 20 19"><path d="M2.1 7 L2.1 2.4 Q2.1 1.1 3.4 1.1 L6 1.1 Q7 1.1 7.3 2 L7.6 2.7 L15.2 1 L15.2 11 L2.1 13.9 Z" fill="#f5a524"/><path d="M2.1 6.1 L15.2 2.1 L15.2 10.9 L2.1 13.9 Z" fill="#fdd862"/></svg>
<div class="t" style="left:324px;top:562px;color:#83a598;-webkit-text-stroke:0.45px #83a598;">links</div>
<svg class="i" style="left:297px;top:561px;overflow:visible" width="20" height="19" viewBox="0 -1 20 19"><path d="M2.1 7 L2.1 2.4 Q2.1 1.1 3.4 1.1 L6 1.1 Q7 1.1 7.3 2 L7.6 2.7 L15.2 1 L15.2 11 L2.1 13.9 Z" fill="#f5a524"/><path d="M2.1 6.1 L15.2 2.1 L15.2 10.9 L2.1 13.9 Z" fill="#fdd862"/></svg>
<div class="t" style="left:324px;top:579px;color:#83a598;-webkit-text-stroke:0.45px #83a598;">outdoors</div>
<svg class="i" style="left:297px;top:578px;overflow:visible" width="20" height="19" viewBox="0 -1 20 19"><path d="M2.1 7 L2.1 2.4 Q2.1 1.1 3.4 1.1 L6 1.1 Q7 1.1 7.3 2 L7.6 2.7 L15.2 1 L15.2 11 L2.1 13.9 Z" fill="#f5a524"/><path d="M2.1 6.1 L15.2 2.1 L15.2 10.9 L2.1 13.9 Z" fill="#fdd862"/></svg>
<div class="t" style="left:324px;top:596px;color:#83a598;-webkit-text-stroke:0.45px #83a598;">pix</div>
<svg class="i" style="left:297px;top:595px;overflow:visible" width="20" height="19" viewBox="0 -1 20 19"><path d="M2.1 7 L2.1 2.4 Q2.1 1.1 3.4 1.1 L6 1.1 Q7 1.1 7.3 2 L7.6 2.7 L15.2 1 L15.2 11 L2.1 13.9 Z" fill="#f5a524"/><path d="M2.1 6.1 L15.2 2.1 L15.2 10.9 L2.1 13.9 Z" fill="#fdd862"/></svg>
<div class="t" style="left:324px;top:613px;color:#83a598;-webkit-text-stroke:0.45px #83a598;">ratings</div>
<svg class="i" style="left:297px;top:612px;overflow:visible" width="20" height="19" viewBox="0 -1 20 19"><path d="M2.1 7 L2.1 2.4 Q2.1 1.1 3.4 1.1 L6 1.1 Q7 1.1 7.3 2 L7.6 2.7 L15.2 1 L15.2 11 L2.1 13.9 Z" fill="#f5a524"/><path d="M2.1 6.1 L15.2 2.1 L15.2 10.9 L2.1 13.9 Z" fill="#fdd862"/></svg>
<div class="t" style="left:324px;top:630px;color:#83a598;-webkit-text-stroke:0.45px #83a598;">study</div>
<svg class="i" style="left:297px;top:629px;overflow:visible" width="20" height="19" viewBox="0 -1 20 19"><path d="M2.1 7 L2.1 2.4 Q2.1 1.1 3.4 1.1 L6 1.1 Q7 1.1 7.3 2 L7.6 2.7 L15.2 1 L15.2 11 L2.1 13.9 Z" fill="#f5a524"/><path d="M2.1 6.1 L15.2 2.1 L15.2 10.9 L2.1 13.9 Z" fill="#fdd862"/></svg>
<div class="t" style="left:324px;top:647px;color:#83a598;-webkit-text-stroke:0.45px #83a598;">tags</div>
<svg class="i" style="left:297px;top:646px;overflow:visible" width="20" height="19" viewBox="0 -1 20 19"><path d="M2.1 7 L2.1 2.4 Q2.1 1.1 3.4 1.1 L6 1.1 Q7 1.1 7.3 2 L7.6 2.7 L15.2 1 L15.2 11 L2.1 13.9 Z" fill="#f5a524"/><path d="M2.1 6.1 L15.2 2.1 L15.2 10.9 L2.1 13.9 Z" fill="#fdd862"/></svg>
<div class="t" style="left:324px;top:664px;color:#83a598;-webkit-text-stroke:0.45px #83a598;">tech</div>
<svg class="i" style="left:297px;top:663px;overflow:visible" width="20" height="19" viewBox="0 -1 20 19"><path d="M2.1 7 L2.1 2.4 Q2.1 1.1 3.4 1.1 L6 1.1 Q7 1.1 7.3 2 L7.6 2.7 L15.2 1 L15.2 11 L2.1 13.9 Z" fill="#f5a524"/><path d="M2.1 6.1 L15.2 2.1 L15.2 10.9 L2.1 13.9 Z" fill="#fdd862"/></svg>
<div class="r" style="left:288px;top:526px;width:9px;height:1px;background:#83a598;"></div>
<div class="r" style="left:314px;top:526px;width:226px;height:1px;background:#83a598;"></div>
<div class="t" style="left:324px;top:681px;color:#ebdbb2;">index.html</div>
<svg class="i" style="left:297px;top:680px;overflow:visible" width="20" height="19" viewBox="0 -1 20 19"><defs><radialGradient id="gg" cx="0.4" cy="0.35" r="0.7"><stop offset="0" stop-color="#42a5f5"/><stop offset="1" stop-color="#1565c0"/></radialGradient></defs><circle cx="8.9" cy="6.9" r="8" fill="url(#gg)"/><path d="M3.2 2.6 Q5.5 0 8.4 0.2 Q8 2.4 6.5 3.2 Q7.8 4.6 6.6 5.6 Q5 5 3.6 5.5 Q2.6 4 3.2 2.6 Z" fill="#7cc242"/><path d="M7.3 7.3 Q10.5 6.6 12.6 8.3 Q11.8 11 9.6 12.2 Q9.3 14.2 8.2 14.8 Q8.4 12 7.8 10.6 Q6.6 9.2 7.3 7.3 Z" fill="#7cc242"/></svg>
<div class="t" style="left:324px;top:698px;color:#ebdbb2;">index.xml</div>
<svg class="i" style="left:297px;top:697px;overflow:visible" width="20" height="19" viewBox="0 -1 20 19"><rect x="0.9" y="0.7" width="15" height="12.4" fill="#e8e8e8"/><rect x="2.2" y="2.6" width="3.8" height="1.4" fill="#a0a0a0"/><rect x="10.6" y="2.6" width="3.8" height="1.4" fill="#a0a0a0"/><circle cx="8.3" cy="3.3" r="1.2" fill="none" stroke="#b0b0b0" stroke-width="0.6"/><rect x="2.2" y="5.8" width="3.6" height="0.7" fill="#b0b0b0"/><rect x="2.2" y="8.2" width="8" height="3.6" fill="#c4c4c4"/><rect x="11.2" y="6.6" width="3.4" height="3.4" fill="#d0d0d0"/></svg>
<div class="t" style="left:324px;top:715px;color:#ebdbb2;">ncv.gpg</div>
<svg class="i" style="left:297px;top:714px;overflow:visible" width="20" height="19" viewBox="0 -1 20 19"><path d="M5.3 6.5 V3.8 Q5.3 -0.6 8.9 -0.6 Q12.5 -0.6 12.5 3.8 V6.5" fill="none" stroke="#8fb3c4" stroke-width="1.7"/><rect x="3.9" y="5.2" width="10.2" height="10" rx="1.6" fill="#e7a916"/><rect x="8.3" y="8.5" width="1.3" height="3.8" fill="#6b4a10"/></svg>
<div class="t" style="left:315px;top:732px;color:#ebdbb2;">rss.svg</div>
<svg class="i" style="left:297px;top:731px;overflow:visible" width="20" height="19" viewBox="0 -1 20 19"><path d="M0.9 0.8 L3.5 1.7 L6 0.6 L8.1 1.5 V13 L5.6 12.4 L3.3 13.2 L0.9 12.3 Z" fill="#52bdf2"/><path d="M0.9 0.8 L3.5 1.7 L6 0.6 L8.1 1.5 V4.5 Q5 6.5 3.2 6 L0.9 5 Z" fill="#2f84e6"/><path d="M3.3 6.5 Q5.5 5 8 5.4 V8 Q6 7.5 4.5 9 Q3.6 8.2 3.3 6.5 Z" fill="#4fbf5e"/><path d="M4.2 9.8 Q5 8.2 6 8.6 L5.2 10.6 Z" fill="#d4f59a"/><path d="M0.9 12.3 L3.3 13.2 L5.6 12.4 L8.1 13 V12 L0.9 11.4 Z" fill="#e0eef5"/></svg>
<div class="t" style="left:324px;top:749px;color:#ebdbb2;">sitemap.xml</div>
<svg class="i" style="left:297px;top:748px;overflow:visible" width="20" height="19" viewBox="0 -1 20 19"><rect x="0.9" y="0.7" width="15" height="12.4" fill="#e8e8e8"/><rect x="2.2" y="2.6" width="3.8" height="1.4" fill="#a0a0a0"/><rect x="10.6" y="2.6" width="3.8" height="1.4" fill="#a0a0a0"/><circle cx="8.3" cy="3.3" r="1.2" fill="none" stroke="#b0b0b0" stroke-width="0.6"/><rect x="2.2" y="5.8" width="3.6" height="0.7" fill="#b0b0b0"/><rect x="2.2" y="8.2" width="8" height="3.6" fill="#c4c4c4"/><rect x="11.2" y="6.6" width="3.4" height="3.4" fill="#d0d0d0"/></svg>
<div class="t" style="left:324px;top:766px;color:#ebdbb2;">style.css</div>
<svg class="i" style="left:297px;top:765px;overflow:visible" width="20" height="19" viewBox="0 -1 20 19"><path d="M8.5 -1 Q16.5 -1 16.8 6.5 Q16.8 9.5 14 9.5 Q11.5 9.4 11.3 11 Q11.8 13 10.6 14 Q9 15 6.5 14.2 Q0.9 12 0.9 6.5 Q0.9 -1 8.5 -1 Z" fill="#f0a24f"/><circle cx="11.4" cy="6.7" r="1" fill="#282828"/><circle cx="4.7" cy="2.3" r="1.5" fill="#e53935"/><circle cx="8.7" cy="1.2" r="1.3" fill="#fdd835"/><circle cx="12.5" cy="3.5" r="1.3" fill="#43a047"/><circle cx="3.7" cy="6.3" r="1.4" fill="#1e73c8"/><circle cx="6.4" cy="10.4" r="1.4" fill="#f4f4f4"/></svg>
<div class="t" style="left:0px;top:1004px;color:#689d6a;">drwx------</div>
<div class="t" style="left:90px;top:1004px;color:#ebdbb2;"> 13 nick wheel  4.0K Sat Mar 14 07:17:39 202  7/10</div>
<div class="t" style="left:549px;top:494px;color:#fb4934;-webkit-text-stroke:0.45px #fb4934;">Newsboat 2.42.0 - Your feeds (16 unread, 148 total)</div>
<div class="t" style="left:720px;top:511px;color:#d79921;">---</div>
<svg class="i" style="left:747px;top:510px;overflow:visible" width="20" height="19" viewBox="0 -1 20 19"><g transform="translate(0,-1)"><path d="M1.8 3.4 L9.2 0 L16.4 3.4 L9.2 6.8 Z" fill="#e0b57e"/><path d="M1.8 3.4 L9.2 6.8 V16 L1.8 12.6 Z" fill="#d29c5e"/><path d="M9.2 6.8 L16.4 3.4 V12.6 L9.2 16 Z" fill="#b47c45"/><path d="M4.8 2 L12.2 5.4 V8 L13.6 7.4 V4.8 L6.2 1.4 Z" fill="#f2dcc0"/></g></svg>
<div class="t" style="left:765px;top:511px;color:#d79921;"> UPDATES---</div>
<div class="t" style="left:549px;top:528px;color:#689d6a;">  30        (0/12) Arkenfox</div>
<div class="t" style="left:549px;top:545px;color:#689d6a;">  31        (0/10) Auxio</div>
<div class="t" style="left:549px;top:562px;color:#689d6a;">  32       (0/100) Fennec F-Droid</div>
<div class="t" style="left:549px;top:579px;color:#689d6a;">  33        (0/27) Fossify Gallery</div>
<div class="t" style="left:549px;top:596px;color:#689d6a;">  34        (0/20) LARBS</div>
<div class="t" style="left:549px;top:613px;color:#689d6a;">  35        (0/12) Lawnchair</div>
<div class="t" style="left:549px;top:630px;color:#689d6a;">  36        (0/28) LibRedirect</div>
<div class="t" style="left:549px;top:647px;color:#689d6a;">  37        (0/20) Lugo</div>
<div class="t" style="left:549px;top:664px;color:#689d6a;">  38        (0/16) Magisk</div>
<div class="t" style="left:549px;top:681px;color:#689d6a;">  39        (0/10) mpv</div>
<div class="t" style="left:549px;top:698px;color:#689d6a;">  40        (0/26) MuPDF</div>
<div class="t" style="left:549px;top:715px;color:#689d6a;">  41        (0/20) mutt-wizard</div>
<div class="t" style="left:549px;top:732px;color:#689d6a;">  42        (0/11) Open Camera</div>
<div class="t" style="left:549px;top:749px;color:#689d6a;">  43        (0/31) Orbot</div>
<div class="t" style="left:549px;top:766px;color:#fabd2f;-webkit-text-stroke:0.45px #fabd2f;">  44 N      (1/26) Organic Maps</div>
<div class="r" style="left:828px;top:766px;width:252px;height:17px;background:#928374;"></div>
<div class="t" style="left:549px;top:783px;color:#689d6a;">  45        (0/10) Simple Keyboard</div>
<div class="t" style="left:549px;top:800px;color:#689d6a;">  46        (0/10) Termux</div>
<div class="t" style="left:549px;top:817px;color:#689d6a;">  47        (0/11) Termux:API</div>
<div class="t" style="left:549px;top:834px;color:#689d6a;">  48        (0/23) voidrice</div>
<div class="t" style="left:549px;top:851px;color:#689d6a;">  49        (0/20) zsh fast syntax highlighting</div>
<div class="t" style="left:549px;top:902px;color:#689d6a;">  52        (0/19) Arch Linux News</div>
<div class="t" style="left:549px;top:919px;color:#689d6a;">  53        (0/14) Artix Linux News</div>
<div class="t" style="left:549px;top:936px;color:#689d6a;">  54       (0/176) Brodie Robertson</div>
<div class="t" style="left:549px;top:953px;color:#689d6a;">  55        (0/15) Bryce Vandegrift (Videos)</div>
<div class="t" style="left:549px;top:970px;color:#689d6a;">  56        (0/29) Bryce Vandegrift</div>
<div class="t" style="left:720px;top:885px;color:#d79921;">---</div>
<svg class="i" style="left:747px;top:884px;overflow:visible" width="20" height="19" viewBox="0 -1 20 19"><path d="M1.6 -0.4 L8 6" stroke="#a6dcea" stroke-width="1.4" stroke-linecap="round"/><path d="M8.6 7.2 L15.4 13.8" stroke="#e53b2b" stroke-width="3.4" stroke-linecap="round"/><path d="M6.4 7.6 L9.6 4.4" stroke="#d42e22" stroke-width="1.6"/></svg>
<div class="t" style="left:765px;top:885px;color:#d79921;"> TECH---</div>
<div class="t" style="left:549px;top:987px;color:#fb4934;-webkit-text-stroke:0.45px #fb4934;">h,q:Quit ENTER,l:Open n:Next Unread r:Reload R:Reload All A</div>
<svg class="i" style="left:666px;top:-1px;overflow:visible" width="20" height="19" viewBox="0 -1 20 19"><path d="M1.2 12.3 L4.8 8.6 L8.6 12.4 L5 16.2 Z" fill="#7fb6c8"/><path d="M3.6 9.4 Q4 3.4 7.2 3 L13.6 9.4 Q13.4 12.6 8.2 13 Z" fill="#b5d8e6"/><path d="M6.4 4.6 Q10.8 5.6 12.2 10.6 Q8.2 9.8 6.4 4.6 Z" fill="#34495a"/><path d="M11 3.2 Q14.2 3.9 14.8 7.4" stroke="#98a6ac" stroke-width="1.1" fill="none"/></svg>
<svg class="i" style="left:720px;top:-1px;overflow:visible" width="20" height="19" viewBox="0 -1 20 19"><rect x="5" y="0.2" width="7.8" height="15.6" rx="1.3" fill="#7bc842"/><rect x="7.2" y="-0.6" width="3.4" height="1.4" fill="#cfcfcf"/><path d="M8.9 4.5 V7.7 M7.3 6.1 H10.5" stroke="#ffffff" stroke-width="1"/><path d="M7.6 13.5 H10.2" stroke="#e8f5d8" stroke-width="0.9"/></svg>
<svg class="i" style="left:936px;top:-1px;overflow:visible" width="20" height="19" viewBox="0 -1 20 19"><circle cx="8.6" cy="8.6" r="7.6" fill="#a9d3ea"/><circle cx="8.6" cy="8.6" r="6.4" fill="#f8f8f8"/><path d="M8.3 4.4 V9.1 H11.8" fill="none" stroke="#5d4037" stroke-width="1.1"/></svg>
<svg class="i" style="left:1026px;top:-1px;overflow:visible" width="20" height="19" viewBox="0 -1 20 19"><rect x="1.2" y="0" width="15.4" height="16" rx="1" fill="#f68b0c"/><path d="M4.3 12.8 V9.2 M7.3 12.8 V6.9 M10.3 12.8 V4.7 M13.3 12.8 V2.5" stroke="#ffffff" stroke-width="1.3"/></svg>
</body></html>
